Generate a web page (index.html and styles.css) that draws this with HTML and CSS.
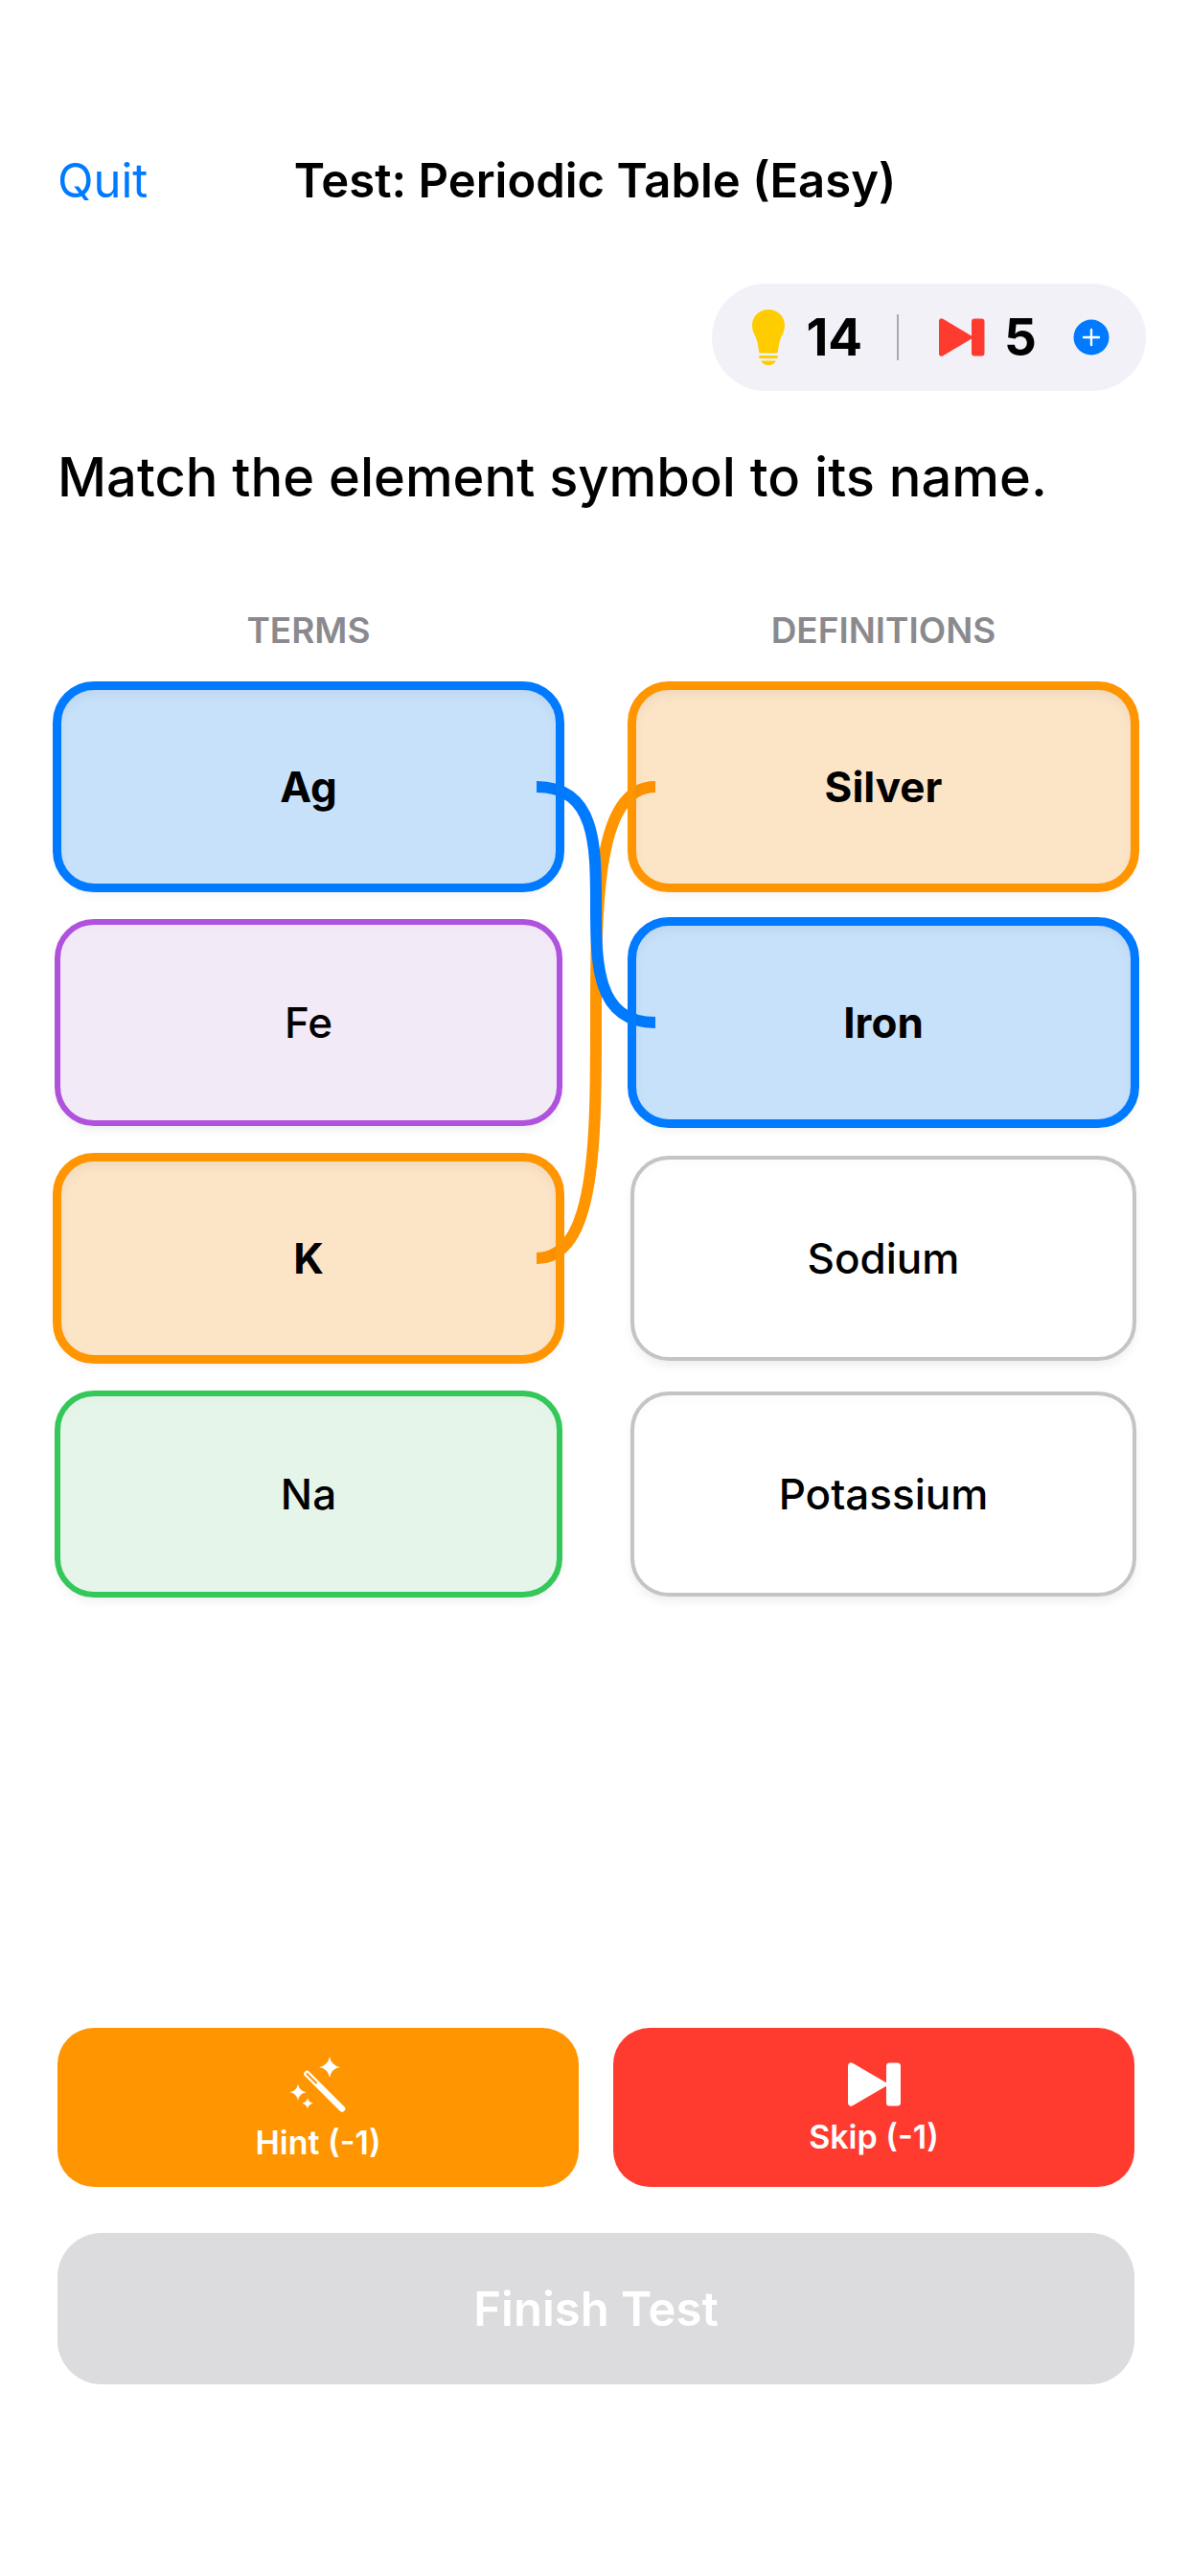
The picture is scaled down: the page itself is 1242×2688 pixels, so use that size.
FILE: index.html
```html
<!DOCTYPE html>
<html lang="en">
<head>
    <meta charset="UTF-8">
    <meta name="viewport" content="width=device-width, initial-scale=1.0, viewport-fit=cover">
    <title>Test: Periodic Table (Easy)</title>
    <link rel="stylesheet" href="styles.css">
</head>
<body>
    <header class="nav-bar">
        <a class="quit-link" href="#quit">Quit</a>
        <h1 class="nav-title">Test: Periodic Table (Easy)</h1>
    </header>

    <div class="toolbar">
        <div class="balance">
            <svg class="bulb-icon" viewBox="0 0 34 58" aria-hidden="true">
                <path fill="#ffcc00" d="M17 0C7.500 0 0 7.400 0 16.500c0 5 1.800 8.200 3.600 12C5.600 33 6.600 39 7 43.500c.1 1.200.8 2 2 2h16c1.200 0 1.900-.8 2-2 .4-4.500 1.400-10.500 3.400-15 1.800-3.800 3.600-7 3.600-12C34 7.400 26.500 0 17 0z"/>
                <rect x="7" y="48" width="20" height="3" rx="1.500" fill="#ffcc00"/>
                <path fill="#ffcc00" d="M9.500 53.500h15c-.6 2.700-3.800 4.500-7.500 4.500s-6.900-1.800-7.500-4.500z"/>
            </svg>
            <span class="balance-value">14</span>
            <span class="balance-divider"></span>
            <svg class="skip-small" viewBox="0 0 48 40" aria-hidden="true">
                <path fill="#ff3b30" d="M0 3C0 .6 2.200-.6 4.200.7L34 18.400V3.500Q34 .5 37 .5h7.500q3 0 3 3v33q0 3-3 3H37q-3 0-3-3V21.600L4.200 39.300C2.200 40.600 0 39.400 0 37z"/>
            </svg>
            <span class="balance-value">5</span>
            <button class="add-button" type="button" aria-label="Get more">
                <svg viewBox="0 0 38 38" aria-hidden="true">
                    <circle cx="19" cy="19" r="18.500" fill="#007aff"/>
                    <path d="M19 11v16M11 19h16" stroke="#fff" stroke-width="2.400" stroke-linecap="round"/>
                </svg>
            </button>
        </div>
    </div>

    <main>
        <p class="question">Match the element symbol to its name.</p>

        <div class="columns column-titles">
            <h2>TERMS</h2>
            <h2>DEFINITIONS</h2>
        </div>

        <div class="columns board">
            <!-- lines between matched cards, drawn under them -->
            <svg class="links" viewBox="0 0 124 948" fill="none" stroke-width="12" aria-hidden="true">
                <path stroke="#ff9500" d="M0 597C124 597 0 105 124 105"/>
                <path stroke="#007aff" d="M0 105C124 105 0 351 124 351"/>
            </svg>
            <div class="cards">
                <button type="button" class="card matched blue">Ag</button>
                <button type="button" class="card purple">Fe</button>
                <button type="button" class="card matched orange">K</button>
                <button type="button" class="card green">Na</button>
            </div>
            <div class="cards">
                <button type="button" class="card matched orange">Silver</button>
                <button type="button" class="card matched blue">Iron</button>
                <button type="button" class="card">Sodium</button>
                <button type="button" class="card">Potassium</button>
            </div>
        </div>
    </main>

    <footer class="actions">
        <div class="boosts">
            <button type="button" class="boost hint">
                <svg class="wand-icon" viewBox="0 0 58 58" aria-hidden="true">
                    <path d="M17.500 18L54 54.500" stroke="#fff" stroke-width="6.500" stroke-linecap="round"/>
                    <path d="M17.500 18L27 27.500" stroke="#ff9500" stroke-width="2" stroke-linecap="round"/>
                    <path fill="#fff" d="M41 0q1.500 9.200 11 11-9.500 1.800-11 11-1.500-9.200-11-11 9.500-1.800 11-11zM8 28.500q1.200 7.300 8.500 8.700-7.300 1.400-8.500 8.700-1.200-7.300-8.500-8.700 7.300-1.400 8.500-8.700zM18 43q.9 4.700 6 5.700-5.100 1-6 5.700-.9-4.700-6-5.700 5.100-1 6-5.700z"/>
                </svg>
                <span>Hint (-1)</span>
            </button>
            <button type="button" class="boost skip">
                <svg class="skip-icon" viewBox="0 0 55 46" aria-hidden="true">
                    <path fill="#fff" d="M0 4C0 .8 2.800-.6 5.200.9L40 21.200V4q0-3.500 3.500-3.500h8q3.500 0 3.500 3.500v38q0 3.500-3.500 3.500h-8Q40 45.500 40 42V24.800L5.200 45.100C2.800 46.600 0 45.200 0 42z"/>
                </svg>
                <span>Skip (-1)</span>
            </button>
        </div>
        <button type="button" class="finish" disabled>Finish Test</button>
    </footer>
</body>
</html>
```

FILE: styles.css
```css
* {
    box-sizing: border-box;
}
body {
    margin: 0;
    min-height: 100vh;
    display: flex;
    flex-direction: column;
    background-color: #fff;
    color: #000;
    font-family: Inter, "Liberation Sans", sans-serif;
}
button {
    font-family: inherit;
    color: inherit;
    border: none;
    padding: 0;
    cursor: pointer;
}
svg {
    display: block;
}

/* Navigation */
.nav-bar {
    display: grid;
    grid-template-columns: 1fr auto 1fr;
    align-items: center;
    height: 80px;
    margin-top: 148px;
    padding: 0 60px;
}
.quit-link {
    font-size: 49px;
    color: #007aff;
    text-decoration: none;
}
.nav-title {
    margin: 0;
    font-size: 49px;
    font-weight: 600;
}

/* Hints and skips left */
.toolbar {
    display: flex;
    justify-content: flex-end;
    margin-top: 68px;
    padding: 0 46px;
}
.balance {
    display: flex;
    align-items: center;
    height: 112px;
    padding: 0 38px 0 42px;
    border-radius: 56px;
    background-color: #f2f1f7;
}
.balance-value {
    font-size: 53px;
    font-weight: 700;
}
.bulb-icon {
    width: 34px;
    height: 58px;
    margin-right: 22px;
}
.balance-divider {
    width: 2px;
    height: 48px;
    margin: 0 42px 0 36px;
    background-color: #a9a9ad;
}
.skip-small {
    width: 48px;
    height: 40px;
    margin-right: 20px;
}
.add-button {
    width: 38px;
    height: 38px;
    margin-left: 38px;
    background: none;
}

/* Question */
main,
.actions {
    padding: 0 58px 0 60px;
}
.question {
    margin: 54px 0 0;
    font-size: 56px;
    line-height: 72px;
    font-weight: 500;
}
.columns {
    display: grid;
    grid-template-columns: 1fr 1fr;
    column-gap: 76px;
}
.column-titles {
    margin-top: 102px;
}
.column-titles h2 {
    margin: 0;
    font-size: 37px;
    line-height: 44px;
    font-weight: 600;
    text-align: center;
    color: #8a8a8e;
}

/* Matching board */
.board {
    position: relative;
    margin-top: 36px;
}
.links {
    position: absolute;
    top: 0;
    left: calc(50% - 62px);
    width: 124px;
    height: 100%;
}
.cards {
    position: relative;
    display: flex;
    flex-direction: column;
    gap: 36px;
}
.card {
    height: 210px;
    border-radius: 38px;
    background-color: transparent;
    outline: 4px solid #c4c4c7;
    outline-offset: -2px;
    box-shadow: 0 6px 12px rgba(0, 0, 0, 0.08), inset 0 6px 12px rgba(0, 0, 0, 0.02);
    font-size: 44px;
    font-weight: 500;
}
.card.purple {
    background-color: #f3eaf8;
    outline: 6px solid #af52de;
    outline-offset: -3px;
}
.card.green {
    background-color: #e6f5ea;
    outline: 6px solid #34c759;
    outline-offset: -3px;
}
.card.matched {
    outline-width: 9px;
    outline-offset: -4px;
    box-shadow: 0 6px 12px rgba(0, 0, 0, 0.08), inset 0 6px 14px rgba(0, 0, 0, 0.08);
    font-weight: 700;
}
.card.blue {
    background-color: rgba(4, 118, 236, 0.22);
    outline-color: #007aff;
}
.card.orange {
    background-color: rgba(241, 137, 0, 0.22);
    outline-color: #ff9500;
}

/* Bottom buttons */
.actions {
    margin-top: auto;
    padding-bottom: 200px;
}
.boosts {
    display: grid;
    grid-template-columns: 1fr 1fr;
    gap: 36px;
}
.boost {
    display: flex;
    flex-direction: column;
    align-items: center;
    justify-content: center;
    gap: 12px;
    height: 166px;
    padding-top: 4px;
    border-radius: 38px;
    color: #fff;
    font-size: 34px;
    line-height: 40px;
    font-weight: 600;
}
.hint {
    background-color: #ff9500;
}
.skip {
    background-color: #ff3b30;
}
.wand-icon {
    width: 58px;
    height: 58px;
}
.skip-icon {
    width: 55px;
    height: 46px;
}
.finish {
    width: 100%;
    height: 158px;
    margin-top: 48px;
    border-radius: 46px;
    background-color: #dcdcde;
    color: #fff;
    font-size: 49px;
    font-weight: 600;
    cursor: default;
}
```
